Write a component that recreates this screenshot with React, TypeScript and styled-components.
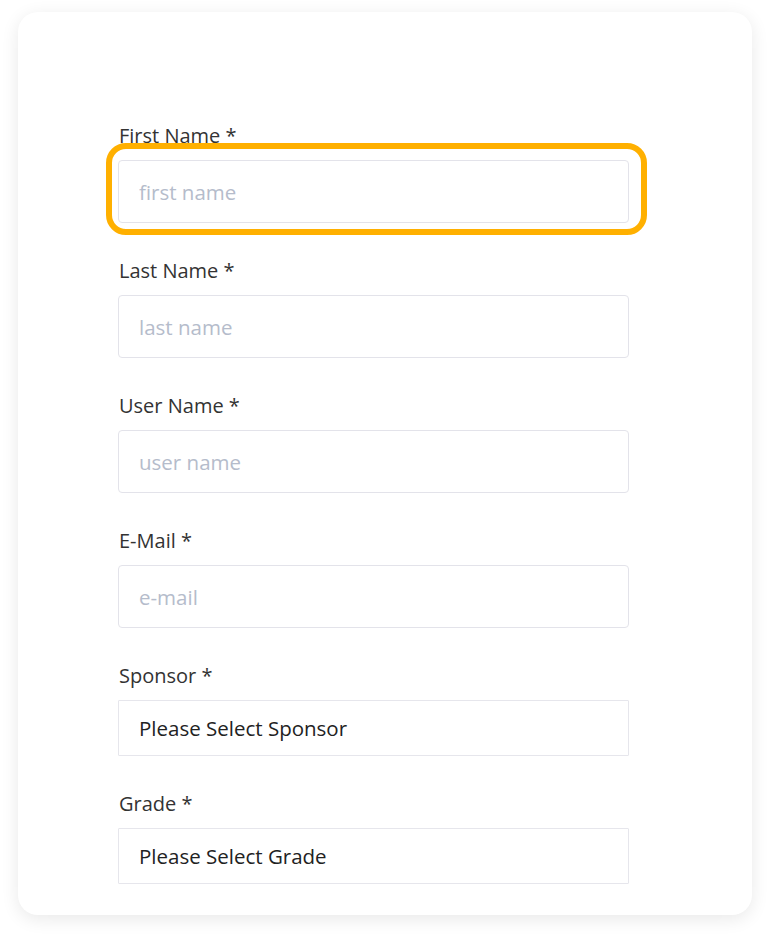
import React from 'react'
import styled, {createGlobalStyle} from 'styled-components'

const GlobalStyle = createGlobalStyle`
  html, body {
    margin: 0;
    padding: 0;
    background: #ffffff;
    font-family: "Open Sans", "Noto Sans", sans-serif;
  }
`

type Field = {
  label: string
  placeholder?: string
  select?: string
  focused?: boolean
}

const FIELDS: Field[] = [
  {label: 'First Name *', placeholder: 'first name', focused: true},
  {label: 'Last Name *', placeholder: 'last name'},
  {label: 'User Name *', placeholder: 'user name'},
  {label: 'E-Mail *', placeholder: 'e-mail'},
  {label: 'Sponsor *', select: 'Please Select Sponsor'},
  {label: 'Grade *', select: 'Please Select Grade'},
]

const App = () => {
  return (
    <>
      <GlobalStyle />
      <StyledPage>
        <StyledCard>
          <StyledForm>
            {FIELDS.map((f) => (
              <StyledGroup key={f.label}>
                <StyledLabel>{f.label}</StyledLabel>
                {f.select ? (
                  <StyledSelect>{f.select}</StyledSelect>
                ) : (
                  <StyledInputWrap>
                    <StyledInput placeholder={f.placeholder} />
                    {f.focused && <StyledFocusRing />}
                  </StyledInputWrap>
                )}
              </StyledGroup>
            ))}
          </StyledForm>
        </StyledCard>
      </StyledPage>
    </>
  )
}

const StyledPage = styled.div`
  width: 770px;
  height: 940px;
  padding: 12px 18px 0;
  box-sizing: border-box;
`

const StyledCard = styled.div`
  width: 734px;
  height: 903px;
  box-sizing: border-box;
  background: #ffffff;
  border-radius: 20px;
  box-shadow: 0 4px 18px rgba(0, 0, 0, 0.09);
  padding: 112px 0 0 100px;
`

const StyledForm = styled.div`
  width: 511px;
  display: flex;
  flex-direction: column;
  gap: 36px;
`

const StyledGroup = styled.div`
  display: flex;
  flex-direction: column;
`

const StyledLabel = styled.div`
  height: 24px;
  line-height: 24px;
  margin-bottom: 12px;
  font-size: 20px;
  color: #333333;
  padding-left: 1px;
`

const StyledInputWrap = styled.div`
  position: relative;
`

const StyledInput = styled.input`
  display: block;
  width: 100%;
  height: 63px;
  box-sizing: border-box;
  border: 1px solid #e3e3ea;
  border-radius: 4px;
  padding: 0 20px;
  font-family: "Open Sans", "Noto Sans", sans-serif;
  font-size: 20.5px;
  color: #333333;
  outline: none;

  &::placeholder {
    color: #b5bccb;
  }
`

const StyledFocusRing = styled.div`
  position: absolute;
  left: -12px;
  top: -17px;
  width: 541px;
  height: 92px;
  box-sizing: border-box;
  border: 6px solid #ffb000;
  border-radius: 20px;
  pointer-events: none;
`

const StyledSelect = styled.div`
  height: 56px;
  box-sizing: border-box;
  border: 1px solid #e6e6ec;
  border-radius: 1px;
  padding: 0 20px;
  display: flex;
  align-items: center;
  font-size: 20.5px;
  color: #222222;
`

export default App
